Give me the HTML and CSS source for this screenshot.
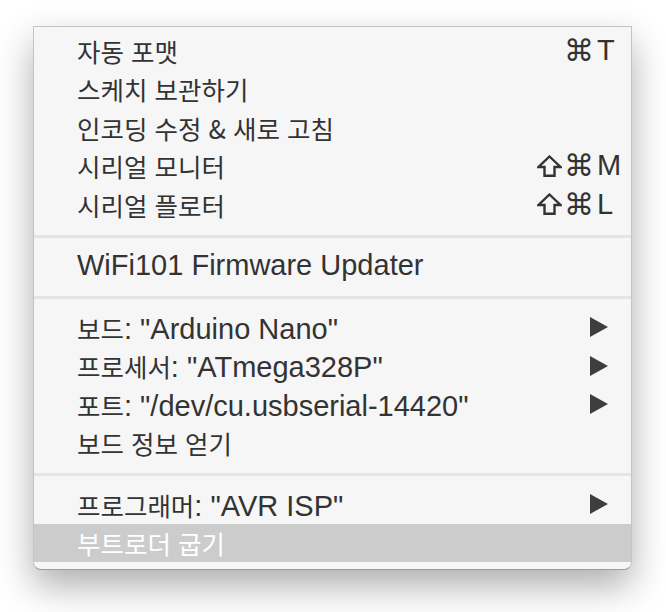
FILE: index.html
```html
<!DOCTYPE html>
<html lang="ko">
    <head>
        <meta charset="UTF-8">
        <meta name="viewport" content="width=device-width, initial-scale=1.0">
        <title>도구 메뉴</title>
        <link rel="stylesheet" href="styles.css">
    </head>
<body>
    <div class="menu">
        <div class="item">
            <span class="label"><span class="ko">자동 포맷</span></span>
            <span class="shortcut"><span class="mods">⌘</span><span class="key">T</span></span>
        </div>
        <div class="item">
            <span class="label"><span class="ko">스케치 보관하기</span></span>
        </div>
        <div class="item">
            <span class="label"><span class="ko">인코딩 수정 &amp; 새로 고침</span></span>
        </div>
        <div class="item">
            <span class="label"><span class="ko">시리얼 모니터</span></span>
            <span class="shortcut">
                <svg class="shift" width="25" height="22" viewBox="0 0 25 22"><path d="M12.5 1.5 L23.5 12 H17.5 V20.8 H7.5 V12 H1.5 Z" /></svg>
                <span class="mods">⌘</span><span class="key">M</span>
            </span>
        </div>
        <div class="item">
            <span class="label"><span class="ko">시리얼 플로터</span></span>
            <span class="shortcut">
                <svg class="shift" width="25" height="22" viewBox="0 0 25 22"><path d="M12.5 1.5 L23.5 12 H17.5 V20.8 H7.5 V12 H1.5 Z" /></svg>
                <span class="mods">⌘</span><span class="key">L</span>
            </span>
        </div>

        <div class="sep"></div>

        <div class="item">
            <span class="label">WiFi101 Firmware Updater</span>
        </div>

        <div class="sep"></div>

        <div class="item">
            <span class="label"><span class="ko">보드</span>: "Arduino Nano"</span>
            <svg class="arrow" width="18" height="20" viewBox="0 0 18 20"><polygon points="0,0 18,10 0,20" /></svg>
        </div>
        <div class="item">
            <span class="label"><span class="ko">프로세서</span>: "ATmega328P"</span>
            <svg class="arrow" width="18" height="20" viewBox="0 0 18 20"><polygon points="0,0 18,10 0,20" /></svg>
        </div>
        <div class="item">
            <span class="label"><span class="ko">포트</span>: "/dev/cu.usbserial-14420"</span>
            <svg class="arrow" width="18" height="20" viewBox="0 0 18 20"><polygon points="0,0 18,10 0,20" /></svg>
        </div>
        <div class="item">
            <span class="label"><span class="ko">보드 정보 얻기</span></span>
        </div>

        <div class="sep"></div>

        <div class="item">
            <span class="label"><span class="ko">프로그래머</span>: "AVR ISP"</span>
            <svg class="arrow" width="18" height="20" viewBox="0 0 18 20"><polygon points="0,0 18,10 0,20" /></svg>
        </div>
        <div class="item selected">
            <span class="label"><span class="ko">부트로더 굽기</span></span>
        </div>
    </div>
</body>
</html>
```

FILE: styles.css
```css
html, body {
    margin: 0;
    padding: 0;
    background-color: #fff;
}
body {
    min-height: 612px;
    padding-top: 26px;
    box-sizing: border-box;
}
.menu {
    box-sizing: border-box;
    width: 599px;
    margin-left: 33px;
    padding: 4px 0 7px;
    background-color: #f6f6f6;
    border: 1px solid #c4c4c4;
    border-bottom-color: #9c9c9c;
    border-radius: 0 0 8px 8px;
    box-shadow: 0 16px 36px rgba(0, 0, 0, 0.32);
    font-family: "Liberation Sans", "Noto Sans CJK KR", sans-serif;
    font-size: 29px;
    color: #333;
}
.item {
    display: flex;
    align-items: center;
    justify-content: space-between;
    height: 38.5px;
    padding: 0 8px 0 43px;
    white-space: nowrap;
}
.ko {
    font-family: "Noto Sans CJK KR", sans-serif;
    font-size: 25.5px;
}
.shortcut {
    display: flex;
    align-items: center;
}
.shift {
    fill: none;
    stroke: #333;
    stroke-width: 2.4;
    margin-right: 2px;
}
.mods {
    font-family: "DejaVu Sans", sans-serif;
    font-size: 30px;
    text-align: right;
}
.key {
    width: 26px;
    margin-left: 3px;
}
.arrow {
    fill: #3e3e3e;
    margin-right: 15px;
}
.sep {
    height: 3px;
    margin: 11px 0 9px;
    background-color: #e4e4e4;
}
.selected {
    background-color: #cccccc;
    color: #fff;
}
```
